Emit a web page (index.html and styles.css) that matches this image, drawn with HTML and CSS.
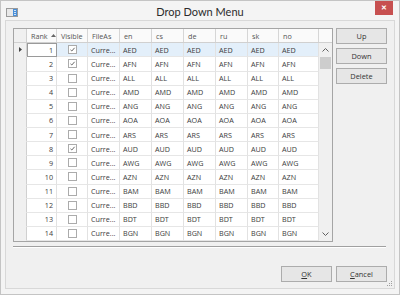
FILE: index.html
```html
<!DOCTYPE html>
<html lang="en">
<head>
  <meta charset="UTF-8" />
  <title>Drop Down Menu</title>
  <link rel="stylesheet" href="styles.css">
</head>
<body>
  <div class="window">
    <!-- Title bar -->
    <div class="titlebar">
      <div class="title-left">
        <svg class="app-icon" width="12" height="9" viewBox="0 0 12 9">
          <rect x="0.5" y="0.5" width="11" height="8" fill="#e8e8e8" stroke="#9a9a9a"/>
          <rect x="7" y="1" width="4" height="7" fill="#4a8fd8"/>
          <rect x="8" y="2" width="2" height="1" fill="#cfe3f7"/>
          <rect x="8" y="4" width="2" height="1" fill="#cfe3f7"/>
          <rect x="8" y="6" width="2" height="1" fill="#cfe3f7"/>
        </svg>
      </div>
      <div class="title">Drop Down Menu</div>
      <div class="title-right">
        <div class="close">&#x2715;</div>
      </div>
    </div>

    <!-- Client area -->
    <div class="client">
      <div class="top">
        <div class="grid">
          <div class="head">
            <div class="cell ind"></div>
            <div class="cell">Rank
              <svg class="sort" width="5" height="3" viewBox="0 0 5 3"><path d="M0 3 L2.5 0 L5 3 Z" fill="#666"/></svg>
            </div>
            <div class="cell">Visible</div>
            <div class="cell">FileAs</div>
            <div class="cell">en</div>
            <div class="cell">cs</div>
            <div class="cell">de</div>
            <div class="cell">ru</div>
            <div class="cell">sk</div>
            <div class="cell">no</div>
            <div class="cell blank"></div>
          </div>
          <div class="body">
            <div class="rows" id="rows"></div>
            <div class="vscroll">
              <div class="arrow">
                <svg width="7" height="4" viewBox="0 0 7 4"><path d="M0.5 3.5 L3.5 0.5 L6.5 3.5" fill="none" stroke="#606060"/></svg>
              </div>
              <div class="track"><div class="thumb"></div></div>
              <div class="arrow">
                <svg width="7" height="4" viewBox="0 0 7 4"><path d="M0.5 0.5 L3.5 3.5 L6.5 0.5" fill="none" stroke="#606060"/></svg>
              </div>
            </div>
          </div>
        </div>

        <div class="side">
          <button class="btn">Up</button>
          <button class="btn">Down</button>
          <button class="btn">Delete</button>
        </div>
      </div>

      <div class="sep"></div>

      <div class="actions">
        <button class="btn wide"><u>O</u>K</button>
        <button class="btn wide"><u>C</u>ancel</button>
      </div>
      <svg class="grip" width="7" height="7" viewBox="0 0 7 7">
        <rect x="5" y="1" width="1" height="1" fill="#a0a0a0"/>
        <rect x="3" y="3" width="1" height="1" fill="#a0a0a0"/>
        <rect x="5" y="3" width="1" height="1" fill="#a0a0a0"/>
        <rect x="1" y="5" width="1" height="1" fill="#a0a0a0"/>
        <rect x="3" y="5" width="1" height="1" fill="#a0a0a0"/>
        <rect x="5" y="5" width="1" height="1" fill="#a0a0a0"/>
      </svg>
    </div>
  </div>

  <script>
    const codes = ["AED", "AFN", "ALL", "AMD", "ANG", "AOA", "ARS", "AUD", "AWG", "AZN", "BAM", "BBD", "BDT", "BGN"];
    const checked = [1, 2, 8];
    const rows = document.getElementById('rows');

    codes.forEach((code, i) => {
      const rank = i + 1;
      const row = document.createElement('div');
      row.className = 'row' + (rank === 1 ? ' selected' : '');
      const box = checked.includes(rank)
        ? '<svg class="check" width="9" height="9" viewBox="0 0 9 9"><rect x="0.5" y="0.5" width="8" height="8" fill="#fff" stroke="#ababab"/><path d="M2.5 4.8 L3.8 6 L6.6 2.8" fill="none" stroke="#555" stroke-width="0.9"/></svg>'
        : '<svg class="check" width="9" height="9" viewBox="0 0 9 9"><rect x="0.5" y="0.5" width="8" height="8" fill="#fff" stroke="#ababab"/></svg>';
      row.innerHTML = `
        <div class="cell ind">${rank === 1 ? '<svg width="3" height="5" viewBox="0 0 3 5"><path d="M0 0 L3 2.5 L0 5 Z" fill="#444"/></svg>' : ''}</div>
        <div class="cell num">${rank}</div>
        <div class="cell center">${box}</div>
        <div class="cell">Curre...</div>
        <div class="cell">${code}</div>
        <div class="cell">${code}</div>
        <div class="cell">${code}</div>
        <div class="cell">${code}</div>
        <div class="cell">${code}</div>
        <div class="cell">${code}</div>
      `;
      rows.appendChild(row);
    });
  </script>
</body>
</html>
```

FILE: styles.css
```css
body {
  margin: 0;
  font-family: "Open Sans", "Noto Sans", sans-serif;
  color: #333;
}

.window {
  width: 400px;
  height: 295px;
  box-sizing: border-box;
  border: 1px solid #c4c4c4;
  background-color: #f4f4f4;
  position: relative;
  display: flex;
  flex-direction: column;
}

.titlebar {
  height: 19px;
  display: grid;
  grid-template-columns: 1fr auto 1fr;
  align-items: start;
}

.title-left {
  padding: 7px 0 0 5px;
}

.app-icon {
  display: block;
}

.title {
  font-family: Lato, "Open Sans", sans-serif;
  font-size: 11px;
  line-height: 21px;
  color: #2b2b2b;
}

.title-right {
  display: flex;
  justify-content: flex-end;
  padding-right: 6px;
}

.close {
  width: 18px;
  height: 14px;
  background-color: #c75050;
  color: #fff;
  font-size: 7px;
  font-weight: bold;
  line-height: 14px;
  text-align: center;
}

.client {
  flex: 1;
  margin: 0 4px 5px 4px;
  border: 1px solid #d8d8d8;
  background-color: #f0f0f0;
  padding: 7px 7px 0 7px;
  position: relative;
}

.top {
  display: flex;
  gap: 3px;
}

/* Grid */
.grid {
  width: 320px;
  height: 214px;
  box-sizing: border-box;
  border: 1px solid #a5a5a5;
  background-color: #fff;
  display: flex;
  flex-direction: column;
  font-size: 7.2px;
  color: #3c3c3c;
}

.head, .row {
  display: grid;
  grid-template-columns: 13px 30px 31px 32px 32px 32px 32px 32px 31px 40px;
}

.head {
  grid-template-columns: 13px 30px 31px 32px 32px 32px 32px 32px 31px 40px 13px;
  height: 15px;
  background-color: #fafafa;
  border-bottom: 1px solid #d0d0d0;
  box-sizing: border-box;
  color: #555;
}

.cell {
  box-sizing: border-box;
  border-right: 1px solid #e2e2e2;
  padding-left: 3px;
  white-space: nowrap;
  overflow: hidden;
  display: flex;
  align-items: center;
}

.head .cell {
  border-right-color: #d6d6d6;
  padding-left: 4px;
}

.head .blank {
  border-right: none;
}

.sort {
  margin-left: 3px;
}

.cell.ind {
  background-color: #f0f0f0;
  border-right: 1px solid #d0d0d0;
  justify-content: center;
  padding-left: 0;
}

.body {
  flex: 1;
  display: flex;
}

.rows {
  flex: 1;
}

.row {
  height: 14.14px;
}

.row .cell {
  border-bottom: 1px solid #e6e6e6;
}

.row .cell.ind {
  border-bottom-color: #f0f0f0;
}

.row.selected .cell {
  background-color: #e3effa;
}

.row.selected .cell.ind {
  background-color: #f0f0f0;
}

.row.selected .cell.num {
  background-color: #fff;
  outline: 1px solid #9a9a9a;
  outline-offset: -1px;
}

.cell.num {
  justify-content: flex-end;
  padding: 0 3px 0 0;
}

.cell.center {
  justify-content: center;
  padding-left: 1px;
}

.check {
  display: block;
}

.vscroll {
  width: 13px;
  background-color: #f0f0f0;
  display: flex;
  flex-direction: column;
}

.arrow {
  height: 14px;
  display: flex;
  align-items: center;
  justify-content: center;
}

.track {
  flex: 1;
}

.thumb {
  margin: 0 1px 0 1px;
  height: 12px;
  background-color: #cdcdcd;
}

/* Buttons */
.side {
  width: 51px;
  display: flex;
  flex-direction: column;
  gap: 4px;
}

.btn {
  height: 16px;
  box-sizing: border-box;
  border: 1px solid #acacac;
  background-color: #e6e6e6;
  font-family: inherit;
  font-size: 7.4px;
  color: #333;
  padding: 0;
}

.btn.wide {
  width: 51px;
}

.sep {
  margin: 4px 1px 0 0;
  border-top: 1px solid #a0a0a0;
  border-bottom: 1px solid #fff;
}

.actions {
  margin-top: 18px;
  display: flex;
  justify-content: flex-end;
  gap: 4px;
}

.grip {
  position: absolute;
  right: 1px;
  bottom: 1px;
}
```
